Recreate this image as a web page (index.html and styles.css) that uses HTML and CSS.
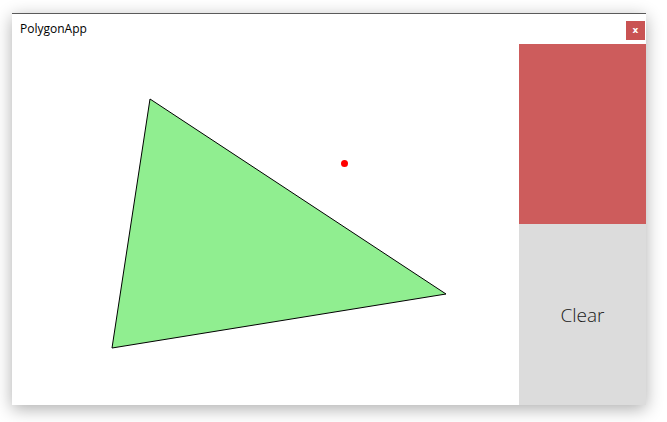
FILE: index.html
```html
<!DOCTYPE html>
<html>
<head>
<meta charset="utf-8">
<link rel="stylesheet" href="styles.css">
</head>
<body>
<div class="window">
  <div class="titlebar">
    <span class="title">PolygonApp</span>
    <button class="close">x</button>
  </div>
  <div class="main">
    <svg class="canvas" width="507" height="361" viewBox="0 0 507 361">
      <polygon points="138,55 434,250 100,304" fill="#90ee90" stroke="#000" stroke-width="1"/>
      <circle cx="332.5" cy="119.5" r="3.5" fill="#ff0000"/>
    </svg>
    <div class="side">
      <div class="swatch"></div>
      <button class="clear">Clear</button>
    </div>
  </div>
</div>
</body>
</html>
```
FILE: styles.css
```css
html, body {
  margin: 0;
  background: #ffffff;
}
body {
  padding: 13px 0 0 12px;
  min-height: 422px;
  box-sizing: border-box;
  font-family: "Open Sans", "Noto Sans", sans-serif;
}
.window {
  width: 634px;
  height: 392px;
  box-sizing: border-box;
  border-top: 1px solid #5a5a5a;
  background: #fff;
  box-shadow: 0 4px 16px rgba(0,0,0,0.32);
  display: flex;
  flex-direction: column;
}
.titlebar {
  height: 30px;
  display: flex;
  align-items: flex-start;
  justify-content: space-between;
}
.title {
  font-size: 12px;
  color: #000;
  margin: 6px 0 0 8px;
  line-height: 18px;
}
.close {
  width: 19px;
  height: 19px;
  margin: 7px 1px 0 0;
  padding: 0;
  border: none;
  background: #c95353;
  color: #fff;
  font-family: "DejaVu Sans", sans-serif;
  font-size: 9px;
  font-weight: bold;
  line-height: 19px;
}
.main {
  flex: 1;
  display: flex;
}
.canvas {
  display: block;
  width: 507px;
  height: 361px;
}
.side {
  width: 127px;
  display: flex;
  flex-direction: column;
}
.swatch {
  height: 180px;
  background: #cd5c5c;
}
.clear {
  flex: 1;
  border: none;
  background: #dcdcdc;
  font-family: "Open Sans", "Noto Sans", sans-serif;
  font-weight: 300;
  font-size: 19px;
  color: #1a1a1a;
  padding: 0;
}
```
